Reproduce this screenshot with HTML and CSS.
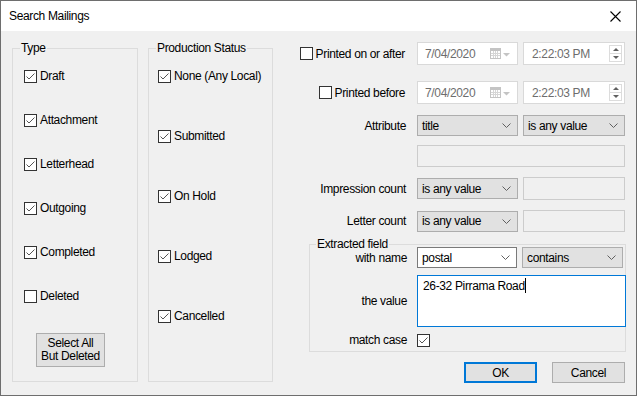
FILE: index.html
```html
<!DOCTYPE html>
<html>
	<head>
		<link rel="stylesheet" href="styles.css">
	</head>
	<body>
		<div class="dialog">
			<div class="titlebar">
				<span class="title">Search Mailings</span>
				<svg class="close" width="11" height="11" viewBox="0 0 11 11"><path d="M0.5 0.5l10 10M10.5 0.5l-10 10" stroke="#000" stroke-width="1.1" fill="none"/></svg>
			</div>
			<div class="content">
				<fieldset class="group type">
					<legend>Type</legend>
					<div class="checks">
						<label class="check"><svg class="box" width="13" height="13" viewBox="0 0 13 13"><rect x="0.5" y="0.5" width="12" height="12" fill="#fff" stroke="#333"/><path d="M2.5 6.5l2.5 2.5 5.5-5.5" fill="none" stroke="#555"/></svg>Draft</label>
						<label class="check"><svg class="box" width="13" height="13" viewBox="0 0 13 13"><rect x="0.5" y="0.5" width="12" height="12" fill="#fff" stroke="#333"/><path d="M2.5 6.5l2.5 2.5 5.5-5.5" fill="none" stroke="#555"/></svg>Attachment</label>
						<label class="check"><svg class="box" width="13" height="13" viewBox="0 0 13 13"><rect x="0.5" y="0.5" width="12" height="12" fill="#fff" stroke="#333"/><path d="M2.5 6.5l2.5 2.5 5.5-5.5" fill="none" stroke="#555"/></svg>Letterhead</label>
						<label class="check"><svg class="box" width="13" height="13" viewBox="0 0 13 13"><rect x="0.5" y="0.5" width="12" height="12" fill="#fff" stroke="#333"/><path d="M2.5 6.5l2.5 2.5 5.5-5.5" fill="none" stroke="#555"/></svg>Outgoing</label>
						<label class="check"><svg class="box" width="13" height="13" viewBox="0 0 13 13"><rect x="0.5" y="0.5" width="12" height="12" fill="#fff" stroke="#333"/><path d="M2.5 6.5l2.5 2.5 5.5-5.5" fill="none" stroke="#555"/></svg>Completed</label>
						<label class="check"><svg class="box" width="13" height="13" viewBox="0 0 13 13"><rect x="0.5" y="0.5" width="12" height="12" fill="#fff" stroke="#333"/></svg>Deleted</label>
					</div>
					<button class="btn select-all">Select All<br>But Deleted</button>
				</fieldset>

				<fieldset class="group status">
					<legend>Production Status</legend>
					<div class="checks">
						<label class="check"><svg class="box" width="13" height="13" viewBox="0 0 13 13"><rect x="0.5" y="0.5" width="12" height="12" fill="#fff" stroke="#333"/><path d="M2.5 6.5l2.5 2.5 5.5-5.5" fill="none" stroke="#555"/></svg>None (Any Local)</label>
						<label class="check"><svg class="box" width="13" height="13" viewBox="0 0 13 13"><rect x="0.5" y="0.5" width="12" height="12" fill="#fff" stroke="#333"/><path d="M2.5 6.5l2.5 2.5 5.5-5.5" fill="none" stroke="#555"/></svg>Submitted</label>
						<label class="check"><svg class="box" width="13" height="13" viewBox="0 0 13 13"><rect x="0.5" y="0.5" width="12" height="12" fill="#fff" stroke="#333"/><path d="M2.5 6.5l2.5 2.5 5.5-5.5" fill="none" stroke="#555"/></svg>On Hold</label>
						<label class="check"><svg class="box" width="13" height="13" viewBox="0 0 13 13"><rect x="0.5" y="0.5" width="12" height="12" fill="#fff" stroke="#333"/><path d="M2.5 6.5l2.5 2.5 5.5-5.5" fill="none" stroke="#555"/></svg>Lodged</label>
						<label class="check"><svg class="box" width="13" height="13" viewBox="0 0 13 13"><rect x="0.5" y="0.5" width="12" height="12" fill="#fff" stroke="#333"/><path d="M2.5 6.5l2.5 2.5 5.5-5.5" fill="none" stroke="#555"/></svg>Cancelled</label>
					</div>
				</fieldset>

				<div class="criteria">
					<div class="row r1">
						<label class="label check"><svg class="box" width="13" height="13" viewBox="0 0 13 13"><rect x="0.5" y="0.5" width="12" height="12" fill="#fff" stroke="#333"/></svg>Printed on or after</label>
						<div class="field date">7/04/2020<svg class="cal" width="21" height="11" viewBox="0 0 21 11"><rect x="0.5" y="0.5" width="10" height="10" fill="#fff" stroke="#c4c4c4"/><rect x="1" y="1" width="9" height="2" fill="#c4c4c4"/><path d="M1 5.5h9M1 7.5h9M3.5 3v7M5.5 3v7M7.5 3v7" stroke="#d6d6d6"/><path d="M13 5h7l-3.5 3.5z" fill="#c4c4c4"/></svg></div>
						<div class="field time">2:22:03 PM<span class="spin"><span class="up"></span><span class="down"></span></span></div>
					</div>
					<div class="row r2">
						<label class="label check"><svg class="box" width="13" height="13" viewBox="0 0 13 13"><rect x="0.5" y="0.5" width="12" height="12" fill="#fff" stroke="#333"/></svg>Printed before</label>
						<div class="field date">7/04/2020<svg class="cal" width="21" height="11" viewBox="0 0 21 11"><rect x="0.5" y="0.5" width="10" height="10" fill="#fff" stroke="#c4c4c4"/><rect x="1" y="1" width="9" height="2" fill="#c4c4c4"/><path d="M1 5.5h9M1 7.5h9M3.5 3v7M5.5 3v7M7.5 3v7" stroke="#d6d6d6"/><path d="M13 5h7l-3.5 3.5z" fill="#c4c4c4"/></svg></div>
						<div class="field time">2:22:03 PM<span class="spin"><span class="up"></span><span class="down"></span></span></div>
					</div>
					<div class="row r3">
						<span class="label">Attribute</span>
						<div class="select">title<svg width="9" height="5" viewBox="0 0 9 5"><path d="M0.5 0.5l4 4 4-4" fill="none" stroke="#606060"/></svg></div>
						<div class="select">is any value<svg width="9" height="5" viewBox="0 0 9 5"><path d="M0.5 0.5l4 4 4-4" fill="none" stroke="#606060"/></svg></div>
					</div>
					<div class="row r4">
						<span class="label"></span>
						<div class="textbox wide"></div>
					</div>
					<div class="row r5">
						<span class="label">Impression count</span>
						<div class="select">is any value<svg width="9" height="5" viewBox="0 0 9 5"><path d="M0.5 0.5l4 4 4-4" fill="none" stroke="#606060"/></svg></div>
						<div class="textbox"></div>
					</div>
					<div class="row r6">
						<span class="label">Letter count</span>
						<div class="select">is any value<svg width="9" height="5" viewBox="0 0 9 5"><path d="M0.5 0.5l4 4 4-4" fill="none" stroke="#606060"/></svg></div>
						<div class="textbox"></div>
					</div>

					<fieldset class="extracted">
						<legend>Extracted field</legend>
						<div class="row e1">
							<span class="label">with name</span>
							<div class="select white">postal<svg width="9" height="5" viewBox="0 0 9 5"><path d="M0.5 0.5l4 4 4-4" fill="none" stroke="#606060"/></svg></div>
							<div class="select">contains<svg width="9" height="5" viewBox="0 0 9 5"><path d="M0.5 0.5l4 4 4-4" fill="none" stroke="#606060"/></svg></div>
						</div>
						<div class="row e2">
							<span class="label">the value</span>
							<div class="memo">26-32 Pirrama Road<span class="caret"></span></div>
						</div>
						<div class="row e3">
							<span class="label">match case</span>
							<svg class="box" width="13" height="13" viewBox="0 0 13 13"><rect x="0.5" y="0.5" width="12" height="12" fill="#fff" stroke="#333"/><path d="M2.5 6.5l2.5 2.5 5.5-5.5" fill="none" stroke="#555"/></svg>
						</div>
					</fieldset>

					<div class="buttons">
						<button class="btn ok">OK</button>
						<button class="btn">Cancel</button>
					</div>
				</div>
			</div>
		</div>
	</body>
</html>
```

FILE: styles.css
```css
html {
	height: 100%;
}
body {
	margin: 0;
	font-family: "Liberation Sans", Arial, sans-serif;
	font-size: 12px;
	letter-spacing: -0.35px;
	color: #000;
}
.dialog {
	box-sizing: border-box;
	width: 637px;
	height: 396px;
	border: 1px solid #6e6e6e;
	background-color: #f0f0f0;
	display: flex;
	flex-direction: column;
}
.titlebar {
	height: 30px;
	background-color: #fff;
	display: flex;
	align-items: center;
	padding: 0 15px 0 8px;
}
.title {
	flex: 1;
	font-size: 12px;
}
.content {
	display: flex;
	align-items: flex-start;
	padding: 10px 0 0 11px;
}
.group {
	box-sizing: border-box;
	margin: 0;
	padding: 0 0 0 7px;
	height: 341px;
	border: 1px solid #dcdcdc;
	min-width: 0;
}
legend {
	padding: 0 1px;
	line-height: 14px;
}
.type {
	width: 126px;
}
.status {
	width: 125px;
	margin-left: 10px;
}
.checks {
	display: flex;
	flex-direction: column;
	gap: 24px;
	padding: 11px 0 0 4px;
}
.status .checks {
	gap: 40px;
	padding-left: 2px;
}
.check {
	display: flex;
	align-items: center;
	gap: 3px;
	height: 20px;
	line-height: 14px;
	white-space: nowrap;
}
.box {
	flex: none;
	display: block;
}
.btn {
	font-family: inherit;
	font-size: 12px;
	letter-spacing: -0.35px;
	color: #000;
	background-color: #e1e1e1;
	border: 1px solid #adadad;
	padding: 0;
	margin: 0;
}
.select-all {
	display: block;
	width: 69px;
	height: 34px;
	line-height: 13px;
	margin: 27px 0 0 16px;
}

/* right hand column */
.criteria {
	margin-left: 27px;
	width: 326px;
}
.row {
	display: grid;
	grid-template-columns: 112px 101px 102px;
	column-gap: 5px;
	align-items: center;
}
.label {
	text-align: right;
	padding-right: 6px;
	white-space: nowrap;
	line-height: 14px;
}
.row .check {
	justify-content: flex-end;
	height: auto;
	padding-right: 7px;
}
.r1 {
	margin-top: 1px;
	height: 23px;
}
.r2 {
	margin-top: 16px;
	height: 23px;
}
.r3 {
	margin-top: 11px;
	height: 21px;
}
.r4 {
	margin-top: 9px;
	height: 22px;
}
.r5 {
	margin-top: 10px;
	height: 23px;
}
.r6 {
	margin-top: 10px;
	height: 22px;
}
.field {
	box-sizing: border-box;
	height: 23px;
	display: flex;
	align-items: center;
	background-color: #fff;
	border: 1px solid #d9d9d9;
	color: #6d6d6d;
}
.date {
	padding: 0 6px 0 7px;
}
.time {
	padding: 0 2px 0 8px;
}
.cal {
	margin-left: auto;
	display: block;
}
.spin {
	margin-left: auto;
	box-sizing: border-box;
	width: 13px;
	height: 17px;
	border: 1px solid #dcdcdc;
	display: flex;
	flex-direction: column;
}
.spin span {
	flex: 1;
	display: flex;
	align-items: center;
	justify-content: center;
}
.spin .up {
	border-bottom: 1px solid #dcdcdc;
}
.spin .up::before {
	content: "";
	border-left: 3px solid transparent;
	border-right: 3px solid transparent;
	border-bottom: 3px solid #606060;
}
.spin .down::before {
	content: "";
	border-left: 3px solid transparent;
	border-right: 3px solid transparent;
	border-top: 3px solid #606060;
}
.select {
	box-sizing: border-box;
	height: 21px;
	display: flex;
	align-items: center;
	justify-content: space-between;
	padding: 0 6px 0 4px;
	background-color: #e1e1e1;
	border: 1px solid #adadad;
}
.select svg {
	display: block;
}
.select.white {
	background-color: #fff;
	border-color: #7a7a7a;
}
.textbox {
	box-sizing: border-box;
	height: 100%;
	border: 1px solid #cccccc;
	background-color: #f0f0f0;
}
.textbox.wide {
	grid-column: 2 / 4;
}

/* extracted field group */
.extracted {
	margin: 5px 0 0 9px;
	padding: 0 0 3px 0;
	border: 1px solid #dcdcdc;
	min-width: 0;
	width: 317px;
	box-sizing: border-box;
}
.extracted legend {
	margin-left: 6px;
}
.extracted .row {
	grid-template-columns: 102px 100px 101px;
}
.extracted .label {
	padding-right: 5px;
}
.e1 {
	margin-top: -4px;
	height: 21px;
}
.e2 {
	margin-top: 7px;
	height: 52px;
}
.e3 {
	margin-top: 5px;
	height: 16px;
}
.memo {
	grid-column: 2 / 4;
	box-sizing: border-box;
	height: 52px;
	margin-right: -3px;
	background-color: #fff;
	border: 1px solid #0078d7;
	padding: 2px 5px;
	line-height: 14px;
}
.caret {
	display: inline-block;
	width: 1px;
	height: 15px;
	background-color: #000;
	vertical-align: -3px;
}
.buttons {
	display: flex;
	justify-content: flex-end;
	gap: 15px;
	margin: 10px 1px 0 0;
}
.buttons .btn {
	width: 73px;
	height: 21px;
}
.buttons .ok {
	border: 2px solid #0078d7;
}
```
